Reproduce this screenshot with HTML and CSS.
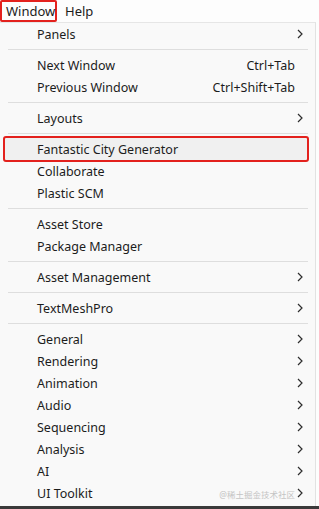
FILE: index.html
```html
<!DOCTYPE html>
<html>
<head>
<meta charset="utf-8">
<link rel="stylesheet" href="styles.css">
</head>
<body>
<div class="menubar">
  <span class="mb-item mb-active">Window</span>
  <span class="mb-item">Help</span>
</div>
<div class="menu">
  <div class="row"><span class="label">Panels</span><svg class="arrow" viewBox="0 0 6 10"><path d="M1 1 L5 5 L1 9"/></svg></div>
  <div class="sep"></div>
  <div class="row"><span class="label">Next Window</span><span class="key">Ctrl+Tab</span></div>
  <div class="row"><span class="label">Previous Window</span><span class="key">Ctrl+Shift+Tab</span></div>
  <div class="sep"></div>
  <div class="row"><span class="label">Layouts</span><svg class="arrow" viewBox="0 0 6 10"><path d="M1 1 L5 5 L1 9"/></svg></div>
  <div class="sep"></div>
  <div class="row hover"><span class="label">Fantastic City Generator</span><span class="mark"></span></div>
  <div class="row"><span class="label">Collaborate</span></div>
  <div class="row"><span class="label">Plastic SCM</span></div>
  <div class="sep"></div>
  <div class="row"><span class="label">Asset Store</span></div>
  <div class="row"><span class="label">Package Manager</span></div>
  <div class="sep"></div>
  <div class="row"><span class="label">Asset Management</span><svg class="arrow" viewBox="0 0 6 10"><path d="M1 1 L5 5 L1 9"/></svg></div>
  <div class="sep"></div>
  <div class="row"><span class="label">TextMeshPro</span><svg class="arrow" viewBox="0 0 6 10"><path d="M1 1 L5 5 L1 9"/></svg></div>
  <div class="sep"></div>
  <div class="row"><span class="label">General</span><svg class="arrow" viewBox="0 0 6 10"><path d="M1 1 L5 5 L1 9"/></svg></div>
  <div class="row"><span class="label">Rendering</span><svg class="arrow" viewBox="0 0 6 10"><path d="M1 1 L5 5 L1 9"/></svg></div>
  <div class="row"><span class="label">Animation</span><svg class="arrow" viewBox="0 0 6 10"><path d="M1 1 L5 5 L1 9"/></svg></div>
  <div class="row"><span class="label">Audio</span><svg class="arrow" viewBox="0 0 6 10"><path d="M1 1 L5 5 L1 9"/></svg></div>
  <div class="row"><span class="label">Sequencing</span><svg class="arrow" viewBox="0 0 6 10"><path d="M1 1 L5 5 L1 9"/></svg></div>
  <div class="row"><span class="label">Analysis</span><svg class="arrow" viewBox="0 0 6 10"><path d="M1 1 L5 5 L1 9"/></svg></div>
  <div class="row"><span class="label">AI</span><svg class="arrow" viewBox="0 0 6 10"><path d="M1 1 L5 5 L1 9"/></svg></div>
  <div class="row"><span class="label">UI Toolkit</span><span class="wm">@稀土掘金技术社区</span><svg class="arrow" viewBox="0 0 6 10"><path d="M1 1 L5 5 L1 9"/></svg></div>
</div>
<div class="bottom"></div>
</body>
</html>
```
FILE: styles.css
```css
html, body {
  margin: 0;
  padding: 0;
  background: #fdfdfd;
}
body {
  width: 319px;
  height: 509px;
  overflow: hidden;
  font-family: "Noto Sans", "Noto Sans CJK SC", sans-serif;
  font-size: 12.5px;
  color: #1c1c1c;
}
.menubar {
  height: 22px;
  display: flex;
  align-items: center;
  background: #fdfdfd;
}
.mb-item {
  padding: 0 6px;
  height: 22px;
  line-height: 22px;
  font-size: 13px;
  margin-right: 2px;
}
.mb-active {
  box-sizing: border-box;
  width: 57px;
  padding-left: 4px;
  border: 2px solid #e3211d;
  border-radius: 2px;
  line-height: 18px;
}
.menu {
  width: 316px;
  height: 484px;
  box-sizing: border-box;
  background: #f9f9f9;
  border-top: 1px solid #e6e6e6;
  border-right: 1px solid #e2e2e2;
}
.row {
  position: relative;
  height: 22px;
  display: flex;
  align-items: center;
  padding-left: 37px;
  padding-right: 12px;
}
.row .label {
  flex: 1;
}
.row .key {
  margin-right: 8px;
}
.arrow {
  width: 6px;
  height: 10px;
  fill: none;
  stroke: #2e2e2e;
  stroke-width: 1.2;
}
.hover {
  background: #f0f0f0;
  margin: 0 7px 0 4px;
  padding-left: 33px;
}
.mark {
  position: absolute;
  left: -1px;
  top: -2px;
  right: -1px;
  bottom: -2px;
  border: 2px solid #e3211d;
  border-radius: 3px;
}
.sep {
  height: 9px;
  display: flex;
  align-items: center;
  padding: 0 7px 0 8px;
}
.sep::before {
  content: "";
  flex: 1;
  height: 1px;
  background: #dedede;
}
.wm {
  font-size: 8.5px;
  color: #c4c4c4;
  margin-right: 2px;
  margin-top: 1px;
}
.bottom {
  height: 3px;
  background: #3a3a3a;
}
```
